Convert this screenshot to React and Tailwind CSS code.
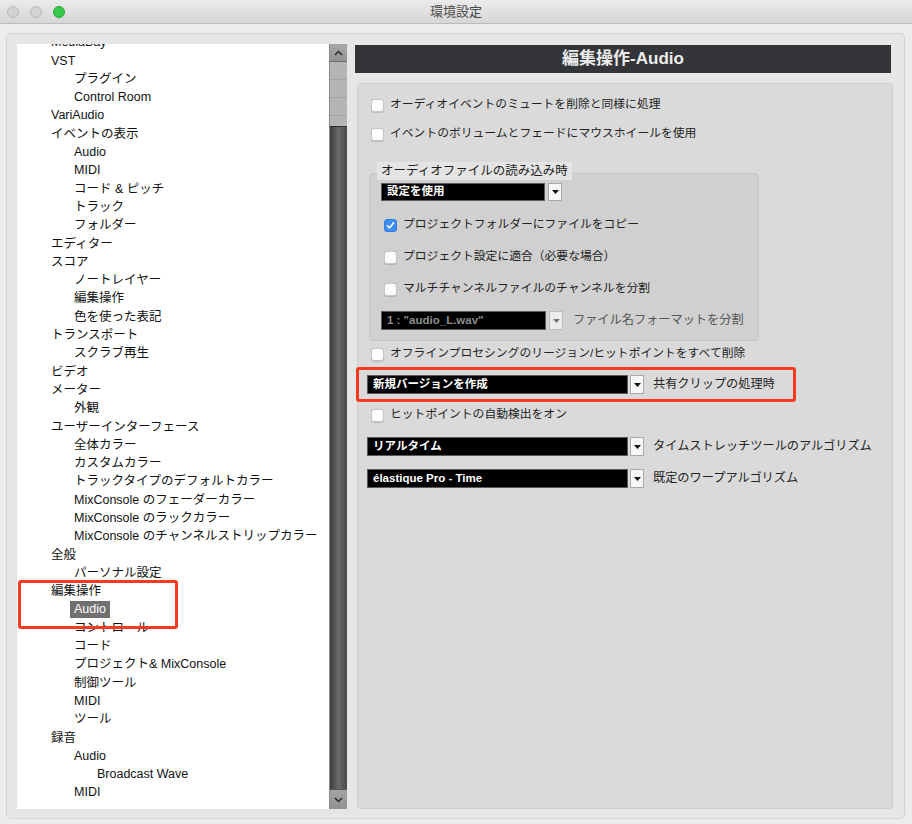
import React from 'react';

const treeItems = [
  ['MediaBay', 0],
  ['VST', 0],
  ['プラグイン', 1],
  ['Control Room', 1],
  ['VariAudio', 0],
  ['イベントの表示', 0],
  ['Audio', 1],
  ['MIDI', 1],
  ['コード & ピッチ', 1],
  ['トラック', 1],
  ['フォルダー', 1],
  ['エディター', 0],
  ['スコア', 0],
  ['ノートレイヤー', 1],
  ['編集操作', 1],
  ['色を使った表記', 1],
  ['トランスポート', 0],
  ['スクラブ再生', 1],
  ['ビデオ', 0],
  ['メーター', 0],
  ['外観', 1],
  ['ユーザーインターフェース', 0],
  ['全体カラー', 1],
  ['カスタムカラー', 1],
  ['トラックタイプのデフォルトカラー', 1],
  ['MixConsole のフェーダーカラー', 1],
  ['MixConsole のラックカラー', 1],
  ['MixConsole のチャンネルストリップカラー', 1],
  ['全般', 0],
  ['パーソナル設定', 1],
  ['編集操作', 0],
  ['Audio', 1, true],
  ['コントロール', 1],
  ['コード', 1],
  ['プロジェクト& MixConsole', 1],
  ['制御ツール', 1],
  ['MIDI', 1],
  ['ツール', 1],
  ['録音', 0],
  ['Audio', 1],
  ['Broadcast Wave', 2],
  ['MIDI', 1],
];

const indent = ['pl-[34px]', 'pl-[57px]', 'pl-[80px]'];

const Checkbox = ({ checked }) =>
  checked ? (
    <div className="w-[13px] h-[13px] rounded-[3px] bg-[#3d8ef3] border border-[#2f7ee0] flex items-center justify-center shrink-0">
      <svg width="9" height="9" viewBox="0 0 9 9">
        <path d="M1.5 4.8 L3.6 7 L7.6 1.8" stroke="white" strokeWidth="1.6" fill="none" strokeLinecap="round" strokeLinejoin="round" />
      </svg>
    </div>
  ) : (
    <div className="w-[13px] h-[13px] rounded-[3px] bg-white border border-[#c4c4c4] shadow-[0_0.5px_1px_rgba(0,0,0,0.15)] shrink-0" />
  );

const CheckRow = ({ label, checked, className = '' }) => (
  <div className={`flex items-center h-[18px] gap-[6px] ${className}`}>
    <Checkbox checked={checked} />
    <span className="text-[11.8px] text-[#222] whitespace-nowrap">{label}</span>
  </div>
);

const Arrow = ({ disabled }) => (
  <div className={`w-[14px] h-full border flex items-center justify-center shrink-0 ${disabled ? 'bg-[#ececec] border-[#bdbdbd]' : 'bg-[#f7f7f7] border-[#a9a9a9]'}`}>
    <svg width="7" height="4" viewBox="0 0 7 4">
      <polygon points="0,0 7,0 3.5,4" fill={disabled ? '#777' : '#111'} />
    </svg>
  </div>
);

const Dropdown = ({ value, width, label, disabled, h = 'h-[19px]', gap = 'gap-[2px]' }) => (
  <div className={`flex items-center ${h} ${gap}`}>
    <div className={`${width} h-full bg-black border border-[#5a5a5a] flex items-center pl-[5px]`}>
      <span className={`text-[11.5px] font-bold whitespace-nowrap ${disabled ? 'text-[#8d8d8d]' : 'text-white'}`}>{value}</span>
    </div>
    <Arrow disabled={disabled} />
    {label && (
      <span className={`ml-[7px] text-[12.2px] whitespace-nowrap ${disabled ? 'text-[#555]' : 'text-[#222]'}`}>{label}</span>
    )}
  </div>
);

const TrafficLight = ({ color }) => (
  <div
    className={`w-[12px] h-[12px] rounded-full border ${
      color === 'green' ? 'bg-[#35c84a] border-[#2ba53c]' : 'bg-[#d3d3d3] border-[#b9b9b9]'
    }`}
  />
);

const Scrollbar = () => (
  <div className="w-[18px] h-full flex flex-col border-l border-[#8a8a8a] bg-[#b5b5b5]">
    <div className="h-[18px] bg-gradient-to-b from-[#a9a9a9] to-[#939393] border-b border-[#6c6c6c] flex items-center justify-center">
      <svg width="9" height="6" viewBox="0 0 9 6">
        <path d="M1 5 L4.5 1.5 L8 5" stroke="#2a2a2a" strokeWidth="1.5" fill="none" />
      </svg>
    </div>
    <div className="h-[18px] border-b border-[#a4a4a4]" />
    <div className="h-[18px] border-b border-[#a4a4a4]" />
    <div className="h-[18px] border-b border-[#a4a4a4]" />
    <div className="h-[10px]" />
    <div className="flex-1 bg-gradient-to-r from-[#3c3c3c] via-[#6a6a6a] to-[#4a4a4a] border-t border-[#2e2e2e]" />
    <div className="h-[20px] bg-gradient-to-b from-[#a3a3a3] to-[#929292] border-t border-[#555] flex items-center justify-center">
      <svg width="9" height="6" viewBox="0 0 9 6">
        <path d="M1 1 L4.5 4.5 L8 1" stroke="#2a2a2a" strokeWidth="1.5" fill="none" />
      </svg>
    </div>
  </div>
);

export default function App() {
  return (
    <div className="w-[912px] h-[824px] bg-[#ececec] flex flex-col overflow-hidden font-['Liberation_Sans','Noto_Sans_CJK_JP',sans-serif]">
      {/* title bar */}
      <div className="h-[24px] shrink-0 relative flex items-center bg-gradient-to-b from-[#ebebeb] to-[#d6d6d6] border-b border-[#bcbcbc]">
        <div className="flex items-center gap-[11px] pl-[7px]">
          <TrafficLight />
          <TrafficLight />
          <TrafficLight color="green" />
        </div>
        <div className="absolute inset-0 flex items-center justify-center text-[13px] text-[#4a4a4a]">環境設定</div>
      </div>

      <div className="flex-1 pt-[9px] pl-[6px] pr-[7px] pb-[5px] flex">
        <div className="flex-1 flex bg-[#e6e6e6] border border-[#d3d3d3] rounded-[5px] pl-[10px] pt-[10px] pb-[9px] pr-[11px]">
          {/* tree list */}
          <div className="w-[312px] h-full bg-white overflow-hidden relative">
            <div className="-mt-[10.5px]">
              {treeItems.map(([label, level, selected], i) => (
                <div key={i} className={`h-[18.3px] flex items-center text-[12.5px] text-[#111] whitespace-nowrap ${indent[level]}`}>
                  {selected ? (
                    <span className="bg-[#707070] text-white px-[4px] -ml-[4px] leading-[17px]">{label}</span>
                  ) : (
                    label
                  )}
                </div>
              ))}
            </div>
            <div className="absolute left-[1px] top-[536px] w-[160px] h-[49px] border-[3px] border-[#f43b1f] rounded-[3px]" />
          </div>
          <Scrollbar />

          {/* right side */}
          <div className="flex-1 ml-[8px] flex flex-col">
            <div className="h-[28px] mt-[1px] mr-[2px] bg-[#333538] flex items-center justify-center">
              <span className="text-[17px] font-bold text-[#ececec]">編集操作-Audio</span>
            </div>
            <div className="flex-1 mt-[10px] ml-[2px] bg-[#dadada] border border-[#cdcdcd] rounded-[4px] pl-[13px] pt-[12px] flex flex-col items-start">
              <CheckRow label="オーディオイベントのミュートを削除と同様に処理" />
              <CheckRow className="mt-[11px]" label="イベントのボリュームとフェードにマウスホイールを使用" />

              <div className="mt-[19px] -ml-[2px] flex flex-col items-start">
                <div className="relative z-10 ml-[8px] h-[18px] bg-[#e4e4e4] flex items-center pl-[4px] pr-[4px] text-[12.5px] text-[#1d1d1d]">
                  オーディオファイルの読み込み時
                </div>
                <div className="-mt-[7px] w-[390px] bg-[#d0d0d0] border border-[#c6c6c6] rounded-[4px] pl-[11px] pt-[9px] pb-[10px] flex flex-col items-start">
                  <Dropdown value="設定を使用" width="w-[164px]" h="h-[18px]" gap="gap-[3px]" />
                  <CheckRow className="mt-[15px] ml-[3px]" checked label="プロジェクトフォルダーにファイルをコピー" />
                  <CheckRow className="mt-[14px] ml-[3px]" label="プロジェクト設定に適合（必要な場合）" />
                  <CheckRow className="mt-[14px] ml-[3px]" label="マルチチャンネルファイルのチャンネルを分割" />
                  <div className="mt-[13px]">
                    <Dropdown value={'1 : "audio_L.wav"'} width="w-[165px]" gap="gap-[3px]" disabled label="ファイル名フォーマットを分割" />
                  </div>
                </div>
              </div>

              <CheckRow className="mt-[4px]" label="オフラインプロセシングのリージョン/ヒットポイントをすべて削除" />

              <div className="relative mt-[12px] -ml-[4px]">
                <Dropdown value="新規バージョンを作成" width="w-[261px]" label="共有クリップの処理時" />
                <div className="absolute -left-[11px] -top-[8px] w-[440px] h-[35px] border-[3px] border-[#f43b1f] rounded-[3px]" />
              </div>

              <CheckRow className="mt-[12px]" label="ヒットポイントの自動検出をオン" />
              <div className="mt-[13px] -ml-[4px]">
                <Dropdown value="リアルタイム" width="w-[261px]" label="タイムストレッチツールのアルゴリズム" />
              </div>
              <div className="mt-[13px] -ml-[4px]">
                <Dropdown value="élastique Pro - Time" width="w-[261px]" label="既定のワープアルゴリズム" />
              </div>
            </div>
          </div>
        </div>
      </div>
    </div>
  );
}
